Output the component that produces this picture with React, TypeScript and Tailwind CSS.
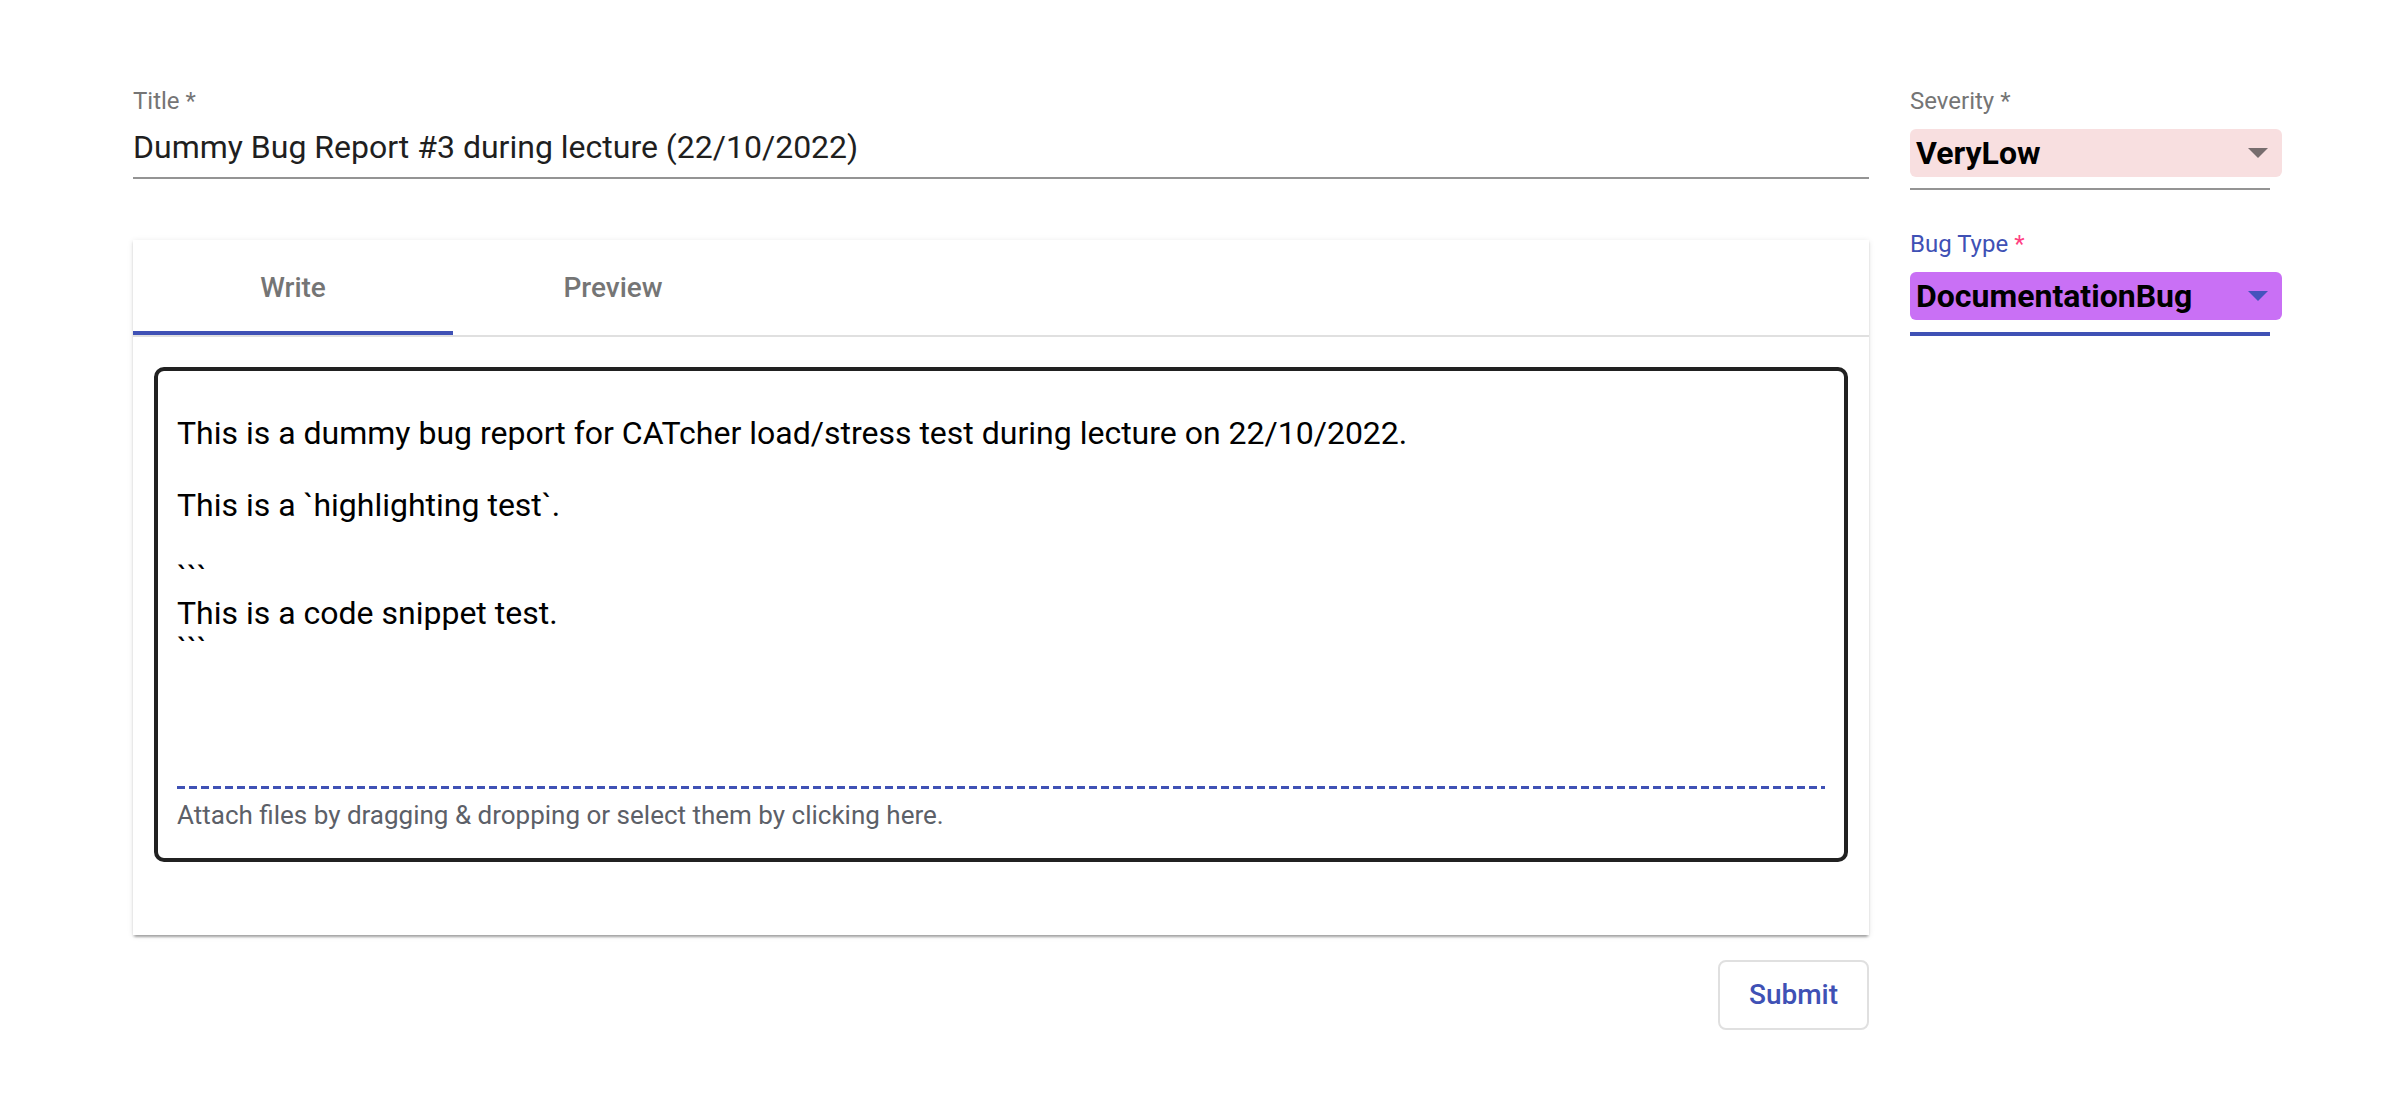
import React from "react";

const bodyLines = [
    "This is a dummy bug report for CATcher load/stress test during lecture on 22/10/2022.",
    "",
    "This is a `highlighting test`.",
    "",
    "```",
    "This is a code snippet test.",
    "```",
];

function SelectField({
    label,
    value,
    focused,
    boxClass,
}: {
    label: string;
    value: string;
    focused?: boolean;
    boxClass: string;
}) {
    return (
        <div className="flex flex-col">
            <div className={`text-[24px] leading-[28px] ${focused ? "text-[#3f51b5]" : "text-[#757575]"}`}>
                {label} <span className={focused ? "text-[#ff4081]" : ""}>*</span>
            </div>
            <div className={`mt-[14px] h-[48px] w-[372px] rounded-[6px] flex items-center justify-between pl-[6px] pr-[14px] ${boxClass}`}>
                <span className="text-[32px] font-bold text-black leading-none">{value}</span>
                <span
                    className={`w-0 h-0 border-x-[10px] border-t-[10px] border-x-transparent ${
                        focused ? "border-t-[#4553bd]" : "border-t-[#776d6e]"
                    }`}
                ></span>
            </div>
            {focused ? (
                <div className="mt-[12px] h-[4px] w-full bg-[#3f51b5]"></div>
            ) : (
                <div className="mt-[11px] h-[2px] w-full bg-[#949494]"></div>
            )}
        </div>
    );
}

export default function App() {
    return (
        <div className="min-h-screen bg-white font-['Roboto','Liberation_Sans',sans-serif] flex pl-[133px] pt-[87px] gap-[41px]">
            {/* Main column */}
            <div className="w-[1736px] flex flex-col">
                {/* Title field */}
                <div className="text-[24px] leading-[28px] text-[#757575]">Title *</div>
                <div className="mt-[12px] text-[32px] leading-[40px] text-[#1f1f1f]">
                    Dummy Bug Report #3 during lecture (22/10/2022)
                </div>
                <div className="mt-[10px] h-[2px] bg-[#949494]"></div>

                {/* Editor card */}
                <div className="mt-[61px] bg-white shadow-[0_4px_2px_-2px_rgba(0,0,0,0.2),0_2px_2px_0_rgba(0,0,0,0.14),0_1px_6px_0_rgba(0,0,0,0.1)]">
                    <div className="flex border-b-2 border-[#e0e0e0]">
                        <div className="relative w-[320px] h-[95px] flex items-center justify-center text-[28px] font-medium text-[#757575]">
                            Write
                            <div className="absolute left-0 right-0 bottom-0 h-[4px] bg-[#3f51b5]"></div>
                        </div>
                        <div className="w-[320px] h-[95px] flex items-center justify-center text-[28px] font-medium text-[#757575]">
                            Preview
                        </div>
                    </div>

                    <div className="px-[21px] pt-[30px] pb-[73px]">
                        <div className="border-[4px] border-[#212121] rounded-[10px] px-[19px] pt-[44px] pb-[27px]">
                            <div className="h-[371px] text-[32px] leading-[36px] text-black">
                                {bodyLines.map((line, i) => (
                                    <div key={i} className="h-[36px] whitespace-pre">
                                        {line}
                                    </div>
                                ))}
                            </div>
                            <div className="h-[3px] bg-[repeating-linear-gradient(90deg,#3f51b5_0_8px,transparent_8px_12px)]"></div>
                            <div className="mt-[10px] text-[26px] leading-[32px] text-[#5c6068]">
                                Attach files by dragging &amp; dropping or select them by clicking here.
                            </div>
                        </div>
                    </div>
                </div>

                <div className="mt-[25px] flex justify-end">
                    <button className="w-[151px] h-[70px] rounded-[8px] border-2 border-[#e0e0e0] bg-white text-[28px] font-medium text-[#3f51b5]">
                        Submit
                    </button>
                </div>
            </div>

            {/* Side column */}
            <div className="w-[360px] flex flex-col gap-[40px]">
                <SelectField label="Severity" value="VeryLow" boxClass="bg-[#f8dfe0]" />
                <SelectField label="Bug Type" value="DocumentationBug" focused boxClass="bg-[#c970f5]" />
            </div>
        </div>
    );
}
